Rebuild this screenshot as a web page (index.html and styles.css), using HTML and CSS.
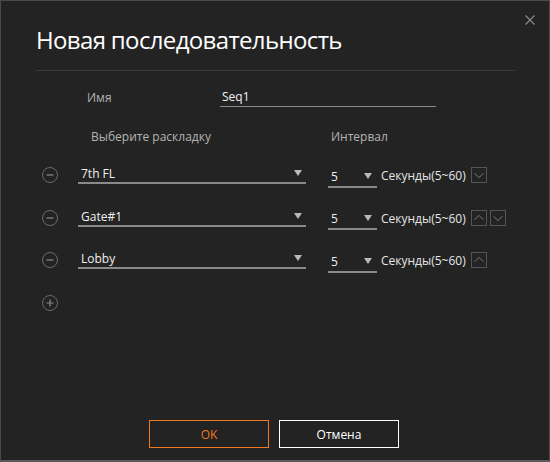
FILE: index.html
```html
<!DOCTYPE html>
<html lang="ru">
<head>
<meta charset="utf-8">
<title>Новая последовательность</title>
<link rel="stylesheet" href="styles.css">
</head>
<body>
<div class="dialog">
  <button class="close" aria-label="Закрыть">
    <svg width="10" height="10" viewBox="0 0 10 10"><path d="M0.5 0.5 L9.5 9.5 M9.5 0.5 L0.5 9.5" stroke="#8a8a8a" stroke-width="1.2" fill="none"/></svg>
  </button>
  <h1 class="title">Новая последовательность</h1>
  <div class="rule"></div>

  <div class="name-row">
    <span class="label name-label">Имя</span>
    <div class="input">Seq1</div>
  </div>

  <div class="head-row">
    <span class="label layout-label">Выберите раскладку</span>
    <span class="label interval-label">Интервал</span>
  </div>

  <div class="row">
    <span class="circle-btn"><svg width="16" height="16" viewBox="0 0 16 16"><circle cx="8" cy="8" r="7.5" stroke="#6a6a6a" fill="none"/><path d="M4.5 8 H11.5" stroke="#8a8a8a" stroke-width="1.2"/></svg></span>
    <div class="select layout-select"><span>7th FL</span><i class="tri"></i></div>
    <div class="select interval-select"><span>5</span><i class="tri"></i></div>
    <span class="secs">Секунды(5~60)</span>
    <span class="arrow-box"><svg width="16" height="16" viewBox="0 0 16 16"><path d="M3 6 L8 11 L13 6" stroke="#8a8a8a" fill="none"/></svg></span>
  </div>

  <div class="row">
    <span class="circle-btn"><svg width="16" height="16" viewBox="0 0 16 16"><circle cx="8" cy="8" r="7.5" stroke="#6a6a6a" fill="none"/><path d="M4.5 8 H11.5" stroke="#8a8a8a" stroke-width="1.2"/></svg></span>
    <div class="select layout-select"><span>Gate#1</span><i class="tri"></i></div>
    <div class="select interval-select"><span>5</span><i class="tri"></i></div>
    <span class="secs">Секунды(5~60)</span>
    <span class="arrow-box"><svg width="16" height="16" viewBox="0 0 16 16"><path d="M3 10 L8 5 L13 10" stroke="#8a8a8a" fill="none"/></svg></span>
    <span class="arrow-box"><svg width="16" height="16" viewBox="0 0 16 16"><path d="M3 6 L8 11 L13 6" stroke="#8a8a8a" fill="none"/></svg></span>
  </div>

  <div class="row">
    <span class="circle-btn"><svg width="16" height="16" viewBox="0 0 16 16"><circle cx="8" cy="8" r="7.5" stroke="#6a6a6a" fill="none"/><path d="M4.5 8 H11.5" stroke="#8a8a8a" stroke-width="1.2"/></svg></span>
    <div class="select layout-select"><span>Lobby</span><i class="tri"></i></div>
    <div class="select interval-select"><span>5</span><i class="tri"></i></div>
    <span class="secs">Секунды(5~60)</span>
    <span class="arrow-box"><svg width="16" height="16" viewBox="0 0 16 16"><path d="M3 10 L8 5 L13 10" stroke="#8a8a8a" fill="none"/></svg></span>
  </div>

  <div class="add-row">
    <span class="circle-btn"><svg width="16" height="16" viewBox="0 0 16 16"><circle cx="8" cy="8" r="7.5" stroke="#6a6a6a" fill="none"/><path d="M4.5 8 H11.5 M8 4.5 V11.5" stroke="#8a8a8a" stroke-width="1.2"/></svg></span>
  </div>

  <div class="footer">
    <button class="btn ok">OK</button>
    <button class="btn cancel">Отмена</button>
  </div>
</div>
</body>
</html>
```

FILE: styles.css
```css
html, body {
  margin: 0;
  padding: 0;
  background: #232323;
}

.dialog {
  position: relative;
  width: 550px;
  height: 462px;
  box-sizing: border-box;
  border: 1px solid #4a4a4a;
  border-bottom: 2px solid #5a5a5a;
  background: #232323;
  padding: 0 34px 0 35px;
  display: flex;
  flex-direction: column;
  font-family: "Open Sans", "Noto Sans", sans-serif;
  color: #e6e6e6;
}

.close {
  position: absolute;
  top: 13px;
  right: 13px;
  width: 12px;
  height: 12px;
  padding: 0;
  border: 0;
  background: none;
  display: flex;
  align-items: center;
  justify-content: center;
}

.title {
  margin: 22px 0 0 0;
  font-size: 24px;
  font-weight: 400;
  line-height: 34px;
  color: #ffffff;
  letter-spacing: -0.65px;
}

.rule {
  margin-top: 13px;
  height: 1px;
  background: #3a3a3a;
}

.label {
  font-size: 12px;
  color: #b4b4b4;
}

.name-row {
  display: flex;
  align-items: flex-end;
  margin-top: 16px;
  height: 20px;
}

.name-label {
  margin-left: 51px;
  width: 133px;
  line-height: 16px;
  padding-bottom: 1px;
}

.input {
  width: 216px;
  border-bottom: 1px solid #8a8a8a;
  font-size: 12px;
  color: #f0f0f0;
  padding-left: 2px;
  line-height: 18px;
  box-sizing: border-box;
}

.head-row {
  display: flex;
  margin-top: 20px;
  height: 18px;
  align-items: center;
}

.layout-label {
  margin-left: 55px;
  width: 240px;
}

.row {
  display: flex;
  align-items: center;
  height: 22px;
}

.head-row + .row {
  margin-top: 19px;
}

.row + .row {
  margin-top: 20.5px;
}

.circle-btn {
  width: 16px;
  height: 16px;
  margin-left: 6px;
  display: flex;
}

.select {
  position: relative;
  box-sizing: border-box;
  border-bottom: 2px solid #8a8a8a;
  height: 20px;
  display: flex;
  align-items: center;
  justify-content: space-between;
  font-size: 12px;
  color: #f0f0f0;
}

.layout-select {
  margin-left: 20px;
  width: 228px;
  padding: 0 4px 0 3px;
  align-self: flex-start;
}

.interval-select {
  margin-left: 22px;
  width: 49px;
  padding: 0 5px 0 3px;
  margin-top: 3px;
  height: 22px;
}

.select span {
  line-height: 16px;
  padding-top: 2px;
}

.tri {
  width: 0;
  height: 0;
  border-left: 4px solid transparent;
  border-right: 4px solid transparent;
  border-top: 6px solid #b8b8b8;
}

.secs {
  margin-left: 4px;
  font-size: 12px;
  color: #e6e6e6;
  margin-top: 1px;
}

.arrow-box {
  width: 16px;
  height: 16px;
  box-sizing: border-box;
  border: 1px solid #555;
  margin-left: 3px;
  display: flex;
  align-items: center;
  justify-content: center;
}

.arrow-box svg {
  width: 14px;
  height: 14px;
}

.secs + .arrow-box {
  margin-left: 5px;
}

.add-row {
  display: flex;
  margin-top: 24px;
}

.footer {
  margin-top: auto;
  margin-bottom: 12px;
  margin-left: -3px;
  display: flex;
  justify-content: center;
  gap: 10px;
}

.btn {
  width: 120px;
  height: 28px;
  background: #232323;
  font-family: "Open Sans", "Noto Sans", sans-serif;
  font-size: 12px;
  padding: 0;
}

.ok {
  border: 1px solid #f07820;
  color: #f07820;
}

.cancel {
  border: 1px solid #ffffff;
  color: #ffffff;
}
```
